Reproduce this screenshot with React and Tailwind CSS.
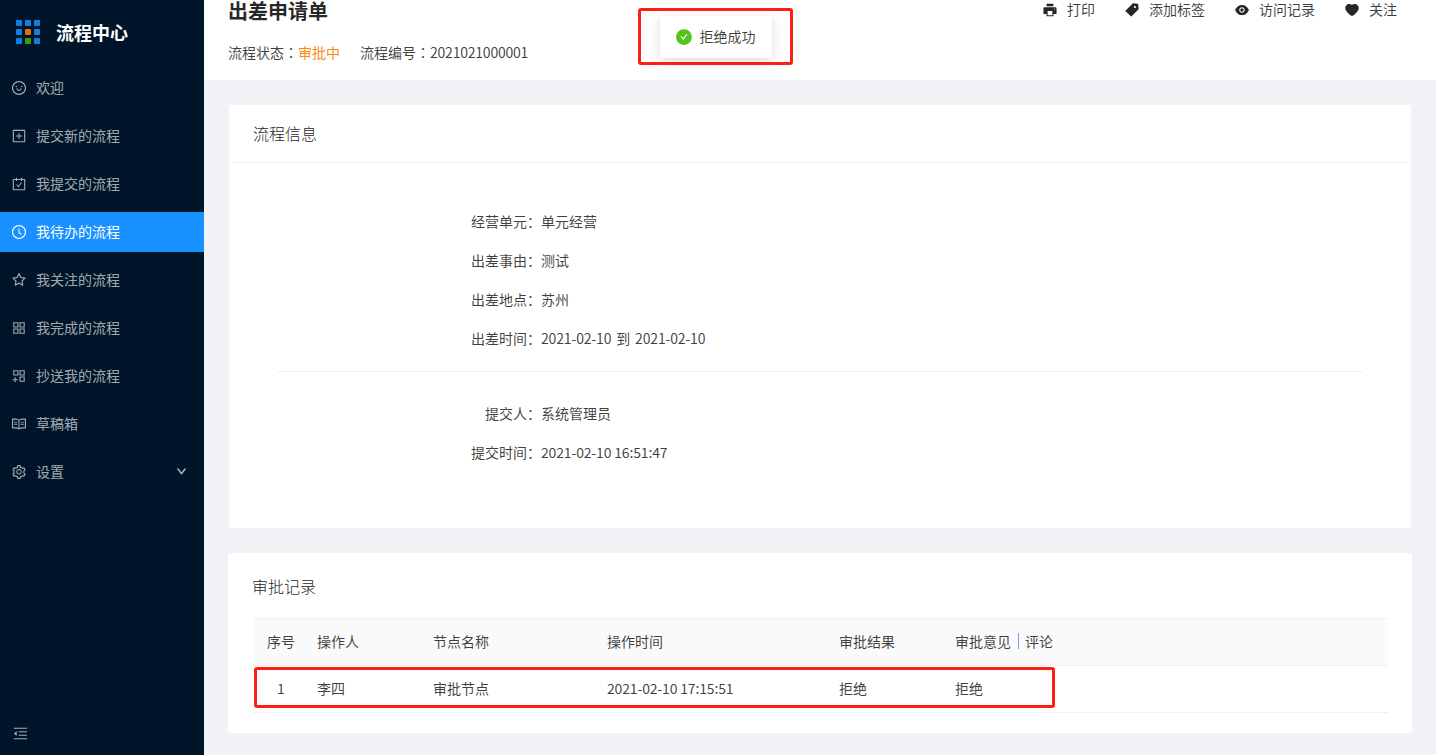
import React from "react";
import {
  AiOutlineSmile, AiOutlinePlusSquare, AiOutlineCarryOut, AiOutlineClockCircle, AiOutlineStar,
  AiOutlineAppstore, AiOutlineAppstoreAdd, AiOutlineRead, AiOutlineSetting, AiOutlineDown, AiOutlineMenuFold,
  AiFillPrinter, AiFillTag, AiFillEye, AiFillHeart, AiFillCheckCircle,
} from "react-icons/ai";

const menu = [
  [AiOutlineSmile, "欢迎"],
  [AiOutlinePlusSquare, "提交新的流程"],
  [AiOutlineCarryOut, "我提交的流程"],
  [AiOutlineClockCircle, "我待办的流程", true],
  [AiOutlineStar, "我关注的流程"],
  [AiOutlineAppstore, "我完成的流程"],
  [AiOutlineAppstoreAdd, "抄送我的流程"],
  [AiOutlineRead, "草稿箱"],
  [AiOutlineSetting, "设置"],
];

const dots = ["#0a84e8","#0a84e8","#0a84e8","#0a84e8","#f56a00","#0a84e8","#0a84e8","#389e0d","#0a84e8"];

function Logo() {
  return (
    <div className="grid grid-cols-3 gap-[3.5px] w-[24px]">
      {dots.map((c, i) => (
        <span key={i} className="w-[5.5px] h-[5.5px] rounded-[1px]" style={{ background: c }} />
      ))}
    </div>
  );
}

function Sidebar() {
  return (
    <aside className="w-[204px] shrink-0 bg-[#001529] flex flex-col h-full text-[14px] text-[#ffffffa6]">
      <div className="h-[64px] flex items-center pl-[16px] gap-[16px] shrink-0">
        <Logo />
        <span className="text-[18px] font-bold text-white leading-none">流程中心</span>
      </div>
      <nav className="flex flex-col gap-[8px] pt-[4px] flex-1">
        {menu.map(([Icon, label, active]) => (
          <div key={label} className={`h-[40px] flex items-center pl-[11px] pr-[17px] ${active ? "bg-[#1890ff] text-white" : ""}`}>
            <Icon className="w-[16px] h-[16px] mr-[9px]" />
            <span className="flex-1 -translate-y-px">{label}</span>
            {label === "设置" && <AiOutlineDown className="w-[11px] h-[11px] stroke-[60px] -translate-y-px" />}
          </div>
        ))}
      </nav>
      <div className="h-[44px] flex items-center pl-[12px] shrink-0">
        <AiOutlineMenuFold className="w-[17px] h-[17px]" />
      </div>
    </aside>
  );
}

const actions = [
  [AiFillPrinter, "打印"],
  [AiFillTag, "添加标签"],
  [AiFillEye, "访问记录"],
  [AiFillHeart, "关注"],
];

const Colon = () => <span className="font-['Noto_Sans_CJK_TC']">：</span>;

function Header() {
  return (
    <header className="h-[80px] bg-white shrink-0 flex justify-between pl-[24px] pr-[39px]">
      <div>
        <h1 className="text-[20px] font-semibold leading-[21px] text-[#000000d9]">出差申请单</h1>
        <p className="mt-[20px] text-[14px] leading-[22px] text-[#000000bf]">
          流程状态<Colon /><span className="text-[#fa8c16]">审批中</span>
          <span className="ml-[20px]">流程编号<Colon /><span className="tracking-[-0.22px]">2021021000001</span></span>
        </p>
      </div>
      <div className="flex gap-[29px] h-[19px] text-[14px] text-[#000000bf]">
        {actions.map(([Icon, label]) => (
          <div key={label} className="flex items-center gap-[9px]">
            <Icon className="w-[16px] h-[16px] text-[#262626]" />
            <span>{label}</span>
          </div>
        ))}
      </div>
    </header>
  );
}

function Row({ label, children }) {
  return (
    <div className="flex h-[39px] items-center -translate-y-px">
      <div className="w-[312px] text-right text-[#000000bf]">{label}：</div>
      <div className="text-[#000000bf]">{children}</div>
    </div>
  );
}

const th = "font-normal px-[8px] pb-[2px] h-[47px]";
const td = "px-[8px] pb-[2px] h-[47px] border-b border-[#f0f0f0]";

function Table() {
  return (
    <table className="table-fixed w-[1135px] text-[14px] text-[#000000bf] border-t border-[#f0f0f0]">
      <colgroup>
        <col className="w-[56px]" /><col className="w-[116px]" /><col className="w-[174px]" />
        <col className="w-[232px]" /><col className="w-[116px]" /><col />
      </colgroup>
      <thead>
        <tr className="bg-[#fafafa]">
          <th className={`${th} text-center`}>序号</th>
          <th className={`${th} text-left`}>操作人</th>
          <th className={`${th} text-left`}>节点名称</th>
          <th className={`${th} text-left`}>操作时间</th>
          <th className={`${th} text-left`}>审批结果</th>
          <th className={`${th} text-left`}>
            <span className="inline-flex items-center">审批意见<span className="w-px h-[16px] bg-[#7fa6c9] mx-[6.5px]" />评论</span>
          </th>
        </tr>
      </thead>
      <tbody>
        <tr className="border-t border-[#f0f0f0]">
          <td className={`${td} text-center`}>1</td>
          <td className={td}>李四</td>
          <td className={td}>审批节点</td>
          <td className={td}><span className="tracking-[-0.16px]">2021-02-10 17:15:51</span></td>
          <td className={td}>拒绝</td>
          <td className={td}>拒绝</td>
        </tr>
      </tbody>
    </table>
  );
}

export default function App() {
  return (
    <div className="relative flex h-[755px] w-full overflow-hidden bg-[#f0f2f5]" style={{ fontFamily: '"Noto Sans CJK SC", "Noto Sans", sans-serif' }}>
      <Sidebar />
      <main className="flex-1 flex flex-col min-w-0">
        <Header />
        <div className="flex flex-col gap-[25px] pl-[24px] pr-[24px] pt-[25px] text-[14px]">
          <section className="bg-white h-[423px] mx-[1px]">
            <div className="h-[58px] flex items-center pl-[24px] text-[16px] font-light text-[#1f1f1f] border-b border-[#f0f0f0]">
              <span className="-translate-y-px">流程信息</span>
            </div>
            <div className="pt-[40px]">
              <Row label="经营单元">单元经营</Row>
              <Row label="出差事由">测试</Row>
              <Row label="出差地点">苏州</Row>
              <Row label="出差时间"><span className="tracking-[-0.16px] [word-spacing:2px]">2021-02-10 到 2021-02-10</span></Row>
              <div className="h-px bg-[#f0f0f0] mx-[48px] mt-[12px] mb-[23px]" />
              <Row label="提交人">系统管理员</Row>
              <Row label="提交时间"><span className="tracking-[-0.16px]">2021-02-10 16:51:47</span></Row>
            </div>
          </section>
          <section className="bg-white h-[180px] rounded-[4px] px-[25px]">
            <div className="h-[65px] flex items-center text-[16px] font-light text-[#1f1f1f] -ml-px">审批记录</div>
            <Table />
          </section>
        </div>
      </main>

      <div className="absolute left-[660px] top-[16px] w-[112px] h-[42px] bg-white rounded-[2px] shadow-[0_3px_12px_rgba(0,0,0,0.15)] flex items-center justify-center gap-[7px] text-[14px] text-[#000000bf]">
        <AiFillCheckCircle className="w-[18px] h-[18px] text-[#52c41a] -ml-[2px]" />
        <span className="-translate-y-px">拒绝成功</span>
      </div>
      <div className="absolute left-[638px] top-[8px] w-[155px] h-[57px] border-[3px] border-[#ff1f12] rounded-[3px] pointer-events-none" />
      <div className="absolute left-[254px] top-[667px] w-[801px] h-[41px] border-[3px] border-[#ff1f12] rounded-[3px] pointer-events-none" />
    </div>
  );
}
